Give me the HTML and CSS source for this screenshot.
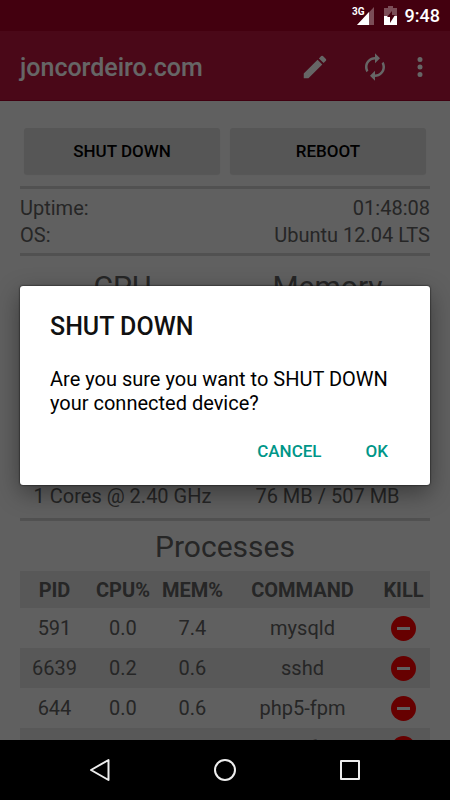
FILE: index.html
```html
<!DOCTYPE html>
<html lang="en">
<head>
    <meta charset="UTF-8">
    <meta name="viewport" content="width=device-width, initial-scale=1.0">
    <title>joncordeiro.com</title>
    <link rel="stylesheet" href="styles.css">
</head>
<body>
    <div class="status">
        <svg width="24" height="20" viewBox="0 0 24 20">
            <text class="net" x="2" y="9">3G</text>
            <path d="M24 1v18H7z" fill="#fff" fill-opacity=".3"/>
            <path d="M19 6v13H7z" fill="#fff"/>
        </svg>
        <svg class="battery" width="13" height="20" viewBox="0 0 13 20">
            <path d="M4 0h5v2h4v8H0V2h4z" fill="#fff" fill-opacity=".3"/>
            <path d="M0 10h13v9H0z" fill="#fff"/>
            <path d="M8 5L3 11h3v6l5-8H8z" fill="#43000f"/>
        </svg>
        <span>9:48</span>
    </div>

    <main class="screen">
        <header class="bar">
            <h1>joncordeiro.com</h1>
            <button class="icon" aria-label="Edit">
                <svg width="30" height="30" viewBox="0 0 24 24"><path d="M3 17.25V21h3.75L17.81 9.94l-3.75-3.75L3 17.25zM20.71 7.04a1 1 0 0 0 0-1.41l-2.34-2.34a1 1 0 0 0-1.41 0l-1.83 1.83 3.75 3.75 1.83-1.83z"/></svg>
            </button>
            <button class="icon" aria-label="Refresh">
                <svg width="30" height="30" viewBox="0 0 24 24"><path d="M12 6v3l4-4-4-4v3c-4.42 0-8 3.58-8 8 0 1.57.46 3.03 1.24 4.26L6.7 14.8A5.87 5.87 0 0 1 6 12c0-3.31 2.69-6 6-6zm6.76 1.74L17.3 9.2c.44.84.7 1.79.7 2.8 0 3.31-2.69 6-6 6v-3l-4 4 4 4v-3c4.42 0 8-3.58 8-8 0-1.57-.46-3.03-1.24-4.26z"/></svg>
            </button>
            <button class="icon more" aria-label="More">
                <svg width="30" height="30" viewBox="0 0 24 24"><path d="M12 8a2 2 0 1 0 0-4 2 2 0 0 0 0 4zm0 2a2 2 0 1 0 0 4 2 2 0 0 0 0-4zm0 6a2 2 0 1 0 0 4 2 2 0 0 0 0-4z"/></svg>
            </button>
        </header>

        <div class="content">
            <div class="buttons">
                <button>SHUT DOWN</button>
                <button>REBOOT</button>
            </div>
            <dl class="info">
                <div><dt>Uptime:</dt><dd>01:48:08</dd></div>
                <div><dt>OS:</dt><dd>Ubuntu 12.04 LTS</dd></div>
            </dl>
            <div class="stats">
                <section>
                    <h2>CPU</h2>
                    <p>1 Cores @ 2.40 GHz</p>
                </section>
                <section>
                    <h2>Memory</h2>
                    <p>76 MB / 507 MB</p>
                </section>
            </div>
            <h2>Processes</h2>
            <table>
                <thead>
                    <tr><th class="pid">PID</th><th class="cpu">CPU%</th><th class="mem">MEM%</th><th>COMMAND</th><th class="end">KILL</th></tr>
                </thead>
                <tbody>
                    <tr><td>591</td><td>0.0</td><td>7.4</td><td>mysqld</td><td><button class="kill" aria-label="Kill 591"></button></td></tr>
                    <tr><td>6639</td><td>0.2</td><td>0.6</td><td>sshd</td><td><button class="kill" aria-label="Kill 6639"></button></td></tr>
                    <tr><td>644</td><td>0.0</td><td>0.6</td><td>php5-fpm</td><td><button class="kill" aria-label="Kill 644"></button></td></tr>
                    <tr><td>646</td><td>0.0</td><td>0.5</td><td>php5-fpm</td><td><button class="kill" aria-label="Kill 646"></button></td></tr>
                </tbody>
            </table>
        </div>

        <div class="overlay">
            <div class="dialog" role="dialog" aria-labelledby="dlgTitle">
                <h3 id="dlgTitle">SHUT DOWN</h3>
                <p>Are you sure you want to SHUT DOWN your connected device?</p>
                <div class="actions">
                    <button>CANCEL</button>
                    <button>OK</button>
                </div>
            </div>
        </div>
    </main>

    <nav class="nav">
        <button aria-label="Back"><svg width="24" height="24" viewBox="0 0 24 24"><path d="M20.500 2v20L3 12z"/></svg></button>
        <button aria-label="Home"><svg width="24" height="24" viewBox="0 0 24 24"><circle cx="12" cy="12" r="10"/></svg></button>
        <button aria-label="Recents"><svg width="24" height="24" viewBox="0 0 24 24"><path d="M3 3h18v18H3z"/></svg></button>
    </nav>
</body>
</html>
```
FILE: styles.css
```css
*{margin: 0;padding: 0;box-sizing: border-box;}
body{display: flex;flex-direction: column;height: 100vh;overflow: hidden;background: #000;font-family: Roboto, "Liberation Sans", sans-serif;font-size: 20px;color: #606060;}
button{border: 0;background: none;font-family: inherit;cursor: pointer;}
svg{display: block;}

.status{display: flex;align-items: center;justify-content: flex-end;height: 31px;padding: 0 10px;background: #43000f;color: #fff;font-size: 18px;font-weight: 500;}
.status span{margin-left: 8px;}
.net{font-size: 10px;font-weight: 700;fill: #fff;}
.battery{margin-left: 10px;}

.screen{position: relative;flex: 1;min-height: 0;overflow: hidden;background: #f0f0f0;}
.bar{display: flex;align-items: center;height: 70px;padding: 2px 15px 0 20px;background: #b9143c;border-bottom: 1px solid #a00028;}
.bar h1{flex: 1;padding-top: 2px;font-size: 25px;font-weight: 500;color: #fff;}
.icon{width: 60px;height: 60px;display: flex;align-items: center;justify-content: center;fill: #fff;}
.more{width: 30px;}

.content{padding: 27px 20px 0;}
.buttons{display: flex;gap: 10px;padding: 0 4px 12px;}
.buttons button{flex: 1;height: 46px;border-radius: 3px;background: #d6d6d6;box-shadow: 0 1px 1px rgba(0,0,0,.1);font-size: 17px;font-weight: 500;color: #000;}
.info{padding: 6px 0 4px;border-top: 3px solid #cacaca;border-bottom: 3px solid #cacaca;line-height: 27px;}
.info div{display: flex;justify-content: space-between;}
.stats{display: flex;height: 265px;padding: 13px 0 10px;border-bottom: 3px solid #cacaca;text-align: center;}
.stats section{flex: 1;display: flex;flex-direction: column;justify-content: space-between;}
h2{font-size: 30px;font-weight: 400;line-height: 36px;text-align: center;}
.content > h2{padding: 8px 0 6px;}

table{width: 100%;table-layout: fixed;border-collapse: collapse;text-align: center;}
th{height: 37px;font-weight: 700;}
td{height: 40px;}
thead tr, tbody tr:nth-child(even){background: #dcdcdc;}
.pid{width: 69px;}
.cpu{width: 68px;}
.mem{width: 71px;}
.end{width: 53px;}
.kill{display: flex;align-items: center;justify-content: center;width: 25px;height: 25px;margin: 0 auto;border-radius: 50%;background: #f00;}
.kill::before{content: "";width: 13px;height: 3px;background: #f0f0f0;}

.overlay{position: absolute;inset: 0;display: flex;align-items: center;padding: 0 20px;background: rgba(0,0,0,.6);}
.dialog{width: 100%;padding: 26px 30px 10px;border-radius: 3px;background: #fff;box-shadow: 0 8px 24px rgba(0,0,0,.4), 0 0 2px #000;color: #111;}
.dialog h3{font-size: 25px;font-weight: 500;line-height: 30px;}
.dialog p{margin-top: 25px;line-height: 24px;color: #000;}
.actions{display: flex;justify-content: flex-end;gap: 20px;margin-top: 12px;}
.actions button{height: 48px;padding: 0 12px;font-size: 17px;font-weight: 500;color: #009688;}

.nav{display: flex;justify-content: center;gap: 25px;height: 60px;background: #000;}
.nav button{width: 100px;display: flex;align-items: center;justify-content: center;}
.nav svg{fill: none;stroke: #eee;stroke-width: 2;stroke-linejoin: round;}
```
